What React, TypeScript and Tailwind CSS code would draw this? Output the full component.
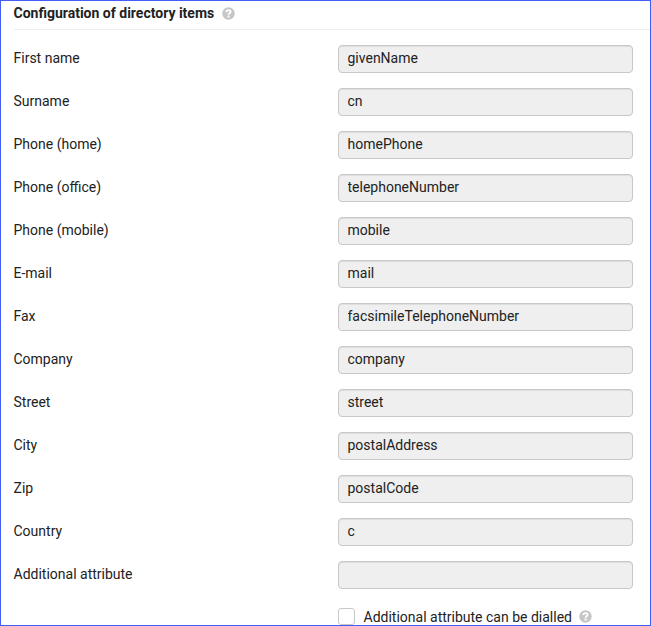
import React from "react";

const rows: [string, string][] = [
  ["First name", "givenName"],
  ["Surname", "cn"],
  ["Phone (home)", "homePhone"],
  ["Phone (office)", "telephoneNumber"],
  ["Phone (mobile)", "mobile"],
  ["E-mail", "mail"],
  ["Fax", "facsimileTelephoneNumber"],
  ["Company", "company"],
  ["Street", "street"],
  ["City", "postalAddress"],
  ["Zip", "postalCode"],
  ["Country", "c"],
  ["Additional attribute", ""],
];

function Help() {
  return (
    <svg viewBox="0 0 13 13" className="size-[13px] shrink-0" aria-label="Help">
      <circle cx="6.5" cy="6.5" r="6.2" fill="#c6c6c6" />
      <path
        d="M4.3 5.1C4.4 3.7 5.3 3.1 6.5 3.1C7.8 3.1 8.6 3.8 8.6 4.8C8.6 6.2 6.6 6.2 6.6 7.8"
        fill="none"
        stroke="white"
        strokeWidth="1.9"
      />
      <rect x="5.6" y="8.6" width="2" height="1.9" fill="white" />
    </svg>
  );
}

export default function App() {
  return (
    <main className="h-[626px] w-[651px] overflow-hidden border border-[#425ef7] bg-white font-['Roboto',sans-serif] text-sm text-[#222]">
      <header className="ml-[13px] flex h-[29px] items-center gap-[7px] border-b border-[#eeeeee] pb-1">
        <h1 className="-ml-[0.5px] pr-[0.5px] font-bold">Configuration of directory items</h1>
        <Help />
      </header>
      <div className="flex flex-col gap-[15px] pt-[15px] pr-[17px] pl-[12.5px]">
        {rows.map(([label, value]) => (
          <label key={label} className="flex h-7 items-center">
            <span className="w-[324.5px] pb-0.5">{label}</span>
            <input
              readOnly
              value={value}
              className="h-7 w-[295px] rounded-[4px] border border-[#c8c8c8] bg-[#efefef] pr-[9px] pb-0.5 pl-[8.5px] shadow-[inset_0_1px_1px_rgba(0,0,0,0.075)] outline-none"
            />
          </label>
        ))}
        <div className="ml-[324.5px] flex h-[26px] items-center">
          <span className="mb-px size-[17px] rounded-[3px] border border-[#c8c8c8]" />
          <span className="pl-[8.5px]">Additional attribute can be dialled</span>
          <span className="pb-px pl-[7px]">
            <Help />
          </span>
        </div>
      </div>
    </main>
  );
}
